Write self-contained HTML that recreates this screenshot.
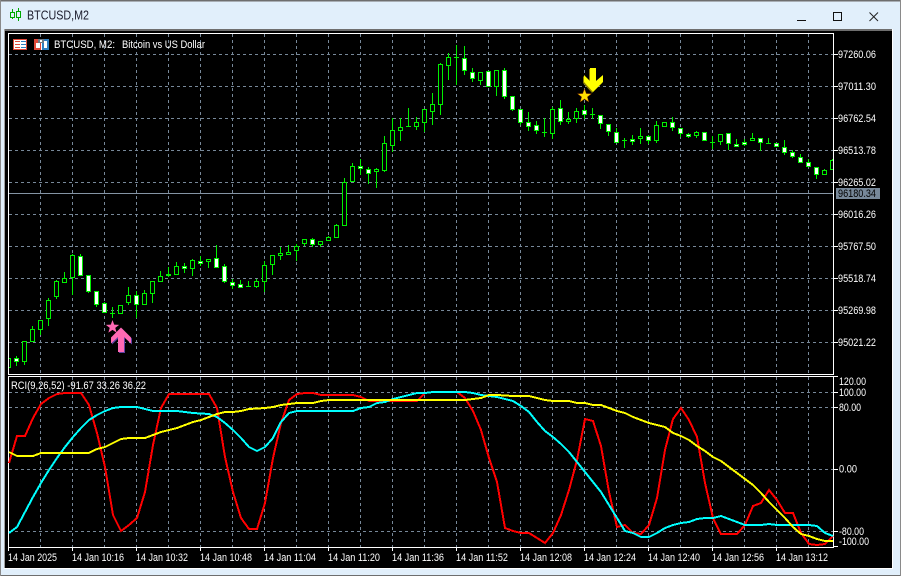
<!DOCTYPE html>
<html><head><meta charset="utf-8"><title>BTCUSD,M2</title>
<style>
html,body{margin:0;padding:0;background:#e1effb;width:901px;height:576px;overflow:hidden}
svg{display:block;position:absolute;left:0;top:0}
text{font-family:"Liberation Sans",sans-serif;font-size:11px;fill:#fff}
</style></head>
<body>
<svg width="901" height="576" viewBox="0 0 901 576" xmlns="http://www.w3.org/2000/svg">
<defs><clipPath id="c"><rect x="9" y="34" width="824" height="340"/></clipPath></defs>
<g shape-rendering="crispEdges">
<rect width="901" height="576" fill="#e1effb"/>
<rect x="0" y="0" width="901" height="1.5" fill="#6e6e6e"/>
<rect x="0" y="575" width="901" height="1" fill="#6e6e6e"/>
<rect x="0" y="0" width="1" height="576" fill="#8a8a8a"/>
<rect x="900" y="0" width="1" height="576" fill="#8a8a8a"/>
<rect x="4" y="29" width="889" height="540" fill="#fff"/>
<rect x="4" y="29" width="888" height="2" fill="#6e6e6e"/>
<rect x="4" y="29" width="1" height="539" fill="#a0a0a0"/>
<rect x="5" y="31" width="887" height="537" fill="#000"/>
<!-- frames -->
<path d="M8.5 33.5H833.5V374.5H8.5ZM8.5 376.5H833.5V547.5H8.5Z" fill="none" stroke="#fff"/>
<!-- grid -->
<path fill="none" stroke="#778899" stroke-dasharray="3 3" d="M40.5 34V374m32-340V374m32-340V374m32-340V374m32-340V374m32-340V374m32-340V374m32-340V374m32-340V374m32-340V374m32-340V374m32-340V374m32-340V374m32-340V374m32-340V374m32-340V374m32-340V374m32-340V374m32-340V374m32-340V374m32-340V374m32-340V374m32-340V374m32-340V374m32-340V374"/>
<path fill="none" stroke="#778899" stroke-dasharray="3 3" d="M9 54.5H833M9 86.5H833M9 118.5H833M9 150.5H833M9 182.5H833M9 214.5H833M9 246.5H833M9 278.5H833M9 310.5H833M9 342.5H833"/>
<path fill="none" stroke="#778899" stroke-dasharray="3 3" d="M40.5 377V547m32-170V547m32-170V547m32-170V547m32-170V547m32-170V547m32-170V547m32-170V547m32-170V547m32-170V547m32-170V547m32-170V547m32-170V547m32-170V547m32-170V547m32-170V547m32-170V547m32-170V547m32-170V547m32-170V547m32-170V547m32-170V547m32-170V547m32-170V547m32-170V547"/>
<path fill="none" stroke="#778899" stroke-dasharray="3 3" d="M9 392.5H833M9 407.5H833M9 469.5H833M9 531.5H833"/>
<!-- bid line -->
<path d="M9 193.5H833" stroke="#8494a4" fill="none"/>
<!-- ticks -->
<path fill="none" stroke="#fff" d="M833 54.5h5M833 86.5h5M833 118.5h5M833 150.5h5M833 182.5h5M833 214.5h5M833 246.5h5M833 278.5h5M833 310.5h5M833 342.5h5M833 376.5h5M833 392.5h5M833 407.5h5M833 469.5h5M833 531.5h5M833 546.5h5M8.5 547v4M72.5 547v4M136.5 547v4M200.5 547v4M264.5 547v4M328.5 547v4M392.5 547v4M456.5 547v4M520.5 547v4M584.5 547v4M648.5 547v4M712.5 547v4M776.5 547v4"/>
<rect x="836" y="188" width="44" height="11" fill="#778899"/>
<!-- candles -->
<g clip-path="url(#c)">
<path fill="none" stroke="#00f000" d="M16.5 356V366M24.5 341V365M32.5 326V342M40.5 320V335M48.5 298V326M56.5 280V299M64.5 272V283M72.5 254V295M80.5 254V276M88.5 275V293M96.5 291V307M104.5 302V313M112.5 307V318M120.5 305V314M128.5 287V305M136.5 291V318M144.5 290V305M152.5 281V303M160.5 271V282M168.5 267V277M176.5 262V275M184.5 263V273M192.5 259V276M200.5 256V266M208.5 259V268M216.5 245V268M224.5 264V283M232.5 279V289M240.5 280V288M248.5 281V286M256.5 279V288M264.5 261V292M272.5 255V275M280.5 247V260M288.5 245V255M296.5 244V261M304.5 239V246M312.5 238V247M320.5 241V247M328.5 236V241M336.5 224V238M344.5 178V226M352.5 163V182M360.5 159V175M368.5 167V184M376.5 168V188M384.5 136V172M392.5 118V152M400.5 118V141M408.5 108V126M416.5 117V130M424.5 109V132M432.5 93V125M440.5 63V115M448.5 53V80M456.5 45V85M464.5 46V75M472.5 68V82M480.5 72V85M496.5 70V96M504.5 68V99M512.5 96V111M520.5 109V125M528.5 112V131M536.5 121V134M544.5 118V137M552.5 107V139M560.5 100V125M568.5 112V124M576.5 108V123M584.5 105V119M592.5 108V119M600.5 115V129M608.5 124V136M616.5 128V143M624.5 138V148M632.5 135V145M640.5 128V144M648.5 135V144M656.5 121V143M672.5 117V131M680.5 128V137M688.5 133V138M696.5 131V138M712.5 136V149M720.5 134V145M728.5 133V150M736.5 139V147M744.5 139V146M752.5 133V141M760.5 138V151M768.5 138V143M784.5 140V155M792.5 150V158M800.5 154V163M808.5 159V167M816.5 167V179M824.5 169V175M832.5 159V170"/>
<path fill="none" stroke="#00f000" d="M110 313.5h5M166 274.5h5M166 275.5h5M246 286.5h5M406 126.5h5M454 57.5h5M542 132.5h5M590 114.5h5M622 140.5h5M710 142.5h5M766 143.5h5"/>
<path fill="#000" stroke="#00f000" d="M6.5 358.5h4V367.5h-4zM22.5 341.5h4V361.5h-4zM30.5 329.5h4V341.5h-4zM38.5 320.5h4V329.5h-4zM46.5 300.5h4V318.5h-4zM54.5 281.5h4V296.5h-4zM62.5 278.5h4V282.5h-4zM70.5 255.5h4V277.5h-4zM118.5 305.5h4V313.5h-4zM126.5 295.5h4V302.5h-4zM142.5 293.5h4V304.5h-4zM150.5 281.5h4V293.5h-4zM158.5 276.5h4V281.5h-4zM174.5 266.5h4V274.5h-4zM190.5 260.5h4V268.5h-4zM206.5 259.5h4V261.5h-4zM254.5 281.5h4V286.5h-4zM262.5 265.5h4V281.5h-4zM270.5 255.5h4V264.5h-4zM278.5 253.5h4V255.5h-4zM286.5 252.5h4V254.5h-4zM294.5 246.5h4V250.5h-4zM302.5 239.5h4V243.5h-4zM318.5 241.5h4V244.5h-4zM326.5 237.5h4V240.5h-4zM334.5 225.5h4V237.5h-4zM342.5 182.5h4V225.5h-4zM350.5 166.5h4V181.5h-4zM374.5 169.5h4V171.5h-4zM382.5 143.5h4V170.5h-4zM390.5 130.5h4V145.5h-4zM398.5 127.5h4V130.5h-4zM414.5 122.5h4V126.5h-4zM422.5 109.5h4V122.5h-4zM430.5 104.5h4V111.5h-4zM438.5 64.5h4V104.5h-4zM446.5 57.5h4V65.5h-4zM478.5 72.5h4V80.5h-4zM494.5 70.5h4V86.5h-4zM550.5 109.5h4V133.5h-4zM566.5 119.5h4V121.5h-4zM574.5 111.5h4V118.5h-4zM638.5 136.5h4V138.5h-4zM654.5 125.5h4V140.5h-4zM662.5 122.5h4V126.5h-4zM694.5 132.5h4V135.5h-4zM718.5 134.5h4V141.5h-4zM750.5 138.5h4V140.5h-4zM822.5 170.5h4V174.5h-4zM830.5 160.5h4V169.5h-4z"/>
<path fill="#fff" stroke="#00f000" d="M14.5 358.5h4V361.5h-4zM78.5 256.5h4V275.5h-4zM86.5 275.5h4V291.5h-4zM94.5 291.5h4V304.5h-4zM102.5 303.5h4V312.5h-4zM134.5 295.5h4V304.5h-4zM182.5 266.5h4V268.5h-4zM198.5 261.5h4V263.5h-4zM214.5 258.5h4V267.5h-4zM222.5 266.5h4V281.5h-4zM230.5 282.5h4V285.5h-4zM238.5 284.5h4V287.5h-4zM310.5 239.5h4V244.5h-4zM358.5 166.5h4V168.5h-4zM366.5 169.5h4V173.5h-4zM462.5 58.5h4V70.5h-4zM470.5 72.5h4V78.5h-4zM486.5 71.5h4V86.5h-4zM502.5 70.5h4V96.5h-4zM510.5 96.5h4V109.5h-4zM518.5 109.5h4V122.5h-4zM526.5 122.5h4V126.5h-4zM534.5 125.5h4V130.5h-4zM558.5 108.5h4V121.5h-4zM582.5 110.5h4V114.5h-4zM598.5 115.5h4V123.5h-4zM606.5 124.5h4V131.5h-4zM614.5 132.5h4V142.5h-4zM630.5 139.5h4V141.5h-4zM646.5 136.5h4V140.5h-4zM670.5 122.5h4V127.5h-4zM678.5 128.5h4V133.5h-4zM686.5 134.5h4V136.5h-4zM702.5 132.5h4V140.5h-4zM726.5 133.5h4V143.5h-4zM734.5 144.5h4V146.5h-4zM742.5 142.5h4V144.5h-4zM758.5 138.5h4V142.5h-4zM774.5 143.5h4V146.5h-4zM782.5 147.5h4V152.5h-4zM790.5 152.5h4V156.5h-4zM798.5 157.5h4V162.5h-4zM806.5 162.5h4V166.5h-4zM814.5 167.5h4V174.5h-4z"/>
</g>
<!-- indicator lines -->
<g fill="none" stroke-width="2" transform="translate(1,0)">
<polyline stroke="#ff0000" points="8,463 16,436 24,436 32,418 40,404 48,398 56,394 64,393 80,393 88,405 96,433 104,467 112,515 120,531 128,525 136,518 144,492 152,445 160,408 168,394 208,394 216,408 224,457 232,492 240,518 248,529 256,529 264,503 272,458 280,423 288,400 296,394 304,393 312,393 320,395 352,395 360,397 368,401 416,401 424,393 432,392 456,392 464,398 472,411 480,430 488,458 496,482 504,528 512,531 520,533 528,533 536,538 544,543 552,533 560,515 568,490 576,460 584,419 592,421 600,446 608,492 616,527 624,525 632,533 640,534 648,525 656,498 664,450 672,419 680,408 688,420 696,437 704,483 712,518 720,534 736,534 744,525 752,506 760,503 768,490 776,500 784,513 792,513 800,533 808,544 816,545 824,544 832,536"/>
<polyline stroke="#00ffff" points="8,533 16,527 24,512 32,497 40,483 48,470 56,458 64,447 72,437 80,428 88,420 96,415 104,411 112,408 120,407 136,407 144,409 152,411 176,411 184,412 192,413 208,414 216,417 224,423 232,430 240,438 248,447 256,451 264,447 272,438 280,422 288,413 296,411 352,411 360,408 368,407 376,403 384,402 392,399 400,397 408,395 416,393 424,393 432,392 464,392 472,393 480,395 488,396 496,397 504,399 512,401 520,406 528,412 536,422 544,431 552,437 560,444 568,452 576,462 584,472 592,482 600,492 608,505 616,518 624,531 632,533 640,537 648,537 656,533 664,528 672,525 680,523 688,522 696,519 704,518 712,518 720,516 728,519 736,522 744,525 760,525 768,524 776,525 808,525 816,526 824,533 832,536"/>
<polyline stroke="#ffff00" points="8,452 16,456 32,456 40,453 88,453 96,449 104,447 112,443 120,439 128,438 144,438 152,435 160,432 168,430 176,428 184,425 192,422 200,420 208,417 216,414 224,412 232,412 240,411 248,409 264,408 272,407 280,405 288,404 296,403 312,403 320,401 328,400 464,400 472,399 480,398 488,395 496,395 512,396 528,396 536,398 544,400 552,401 568,401 576,403 584,403 592,405 600,405 608,408 616,411 624,413 632,417 640,420 648,423 656,425 664,427 672,433 680,436 688,440 696,446 704,451 712,457 720,461 728,467 736,473 744,479 752,485 760,493 768,502 776,510 784,518 792,527 800,534 808,536 816,539 824,541 832,541"/>
</g>
</g>
<!-- arrows & stars -->
<polygon fill="#5b3fa0" points="122,328.5 132,338.5 132,344.5 125,338 125,353 119,353 119,338 112,344.5 112,338.5"/>
<polygon fill="#ff69b4" points="121,327.5 131,337.5 131,343.5 124,337 124,352 118,352 118,337 111,343.5 111,337.5"/>
<polygon fill="#ff69b4" transform="translate(112.5,327)" points="0,-7 1.7,-2.35 6.66,-2.16 2.76,.9 4.11,5.66 0,2.9 -4.11,5.66 -2.76,.9 -6.66,-2.16 -1.7,-2.35"/>
<polygon fill="#8a7a00" points="589,69 595,69 595,82 602,76 602,83 592,93 583,83 583,76 589,82"/>
<polygon fill="#ffff00" points="590,68 596,68 596,81 603,75 603,82 593,92 584,82 584,75 590,81"/>
<polygon fill="#b05000" transform="translate(584.5,96) scale(1.1)" points="0,-7 1.7,-2.35 6.66,-2.16 2.76,.9 4.11,5.66 0,2.9 -4.11,5.66 -2.76,.9 -6.66,-2.16 -1.7,-2.35"/>
<polygon fill="#ffe000" transform="translate(584.5,96) scale(.92)" points="0,-7 1.7,-2.35 6.66,-2.16 2.76,.9 4.11,5.66 0,2.9 -4.11,5.66 -2.76,.9 -6.66,-2.16 -1.7,-2.35"/>
<!-- chart icons -->
<g shape-rendering="crispEdges">
<rect x="13.5" y="39.5" width="13" height="10" fill="#fff" stroke="#e04a3a"/>
<path fill="none" stroke="#e04a3a" d="M15 41.5h5M15 44.5h5M15 47.5h5"/>
<path fill="none" stroke="#2f7fc0" d="M21 41.5h5M21 44.5h5M21 47.5h5"/>
<rect x="34" y="39" width="7" height="11" fill="#e04a3a"/>
<rect x="42" y="39" width="7" height="11" fill="#2f7fc0"/>
<rect x="41" y="43" width="1" height="7" fill="#fff"/>
<rect x="36" y="43" width="4" height="5" fill="#fff"/>
<rect x="44" y="41" width="3" height="7" fill="#fff"/>
<rect x="38" y="39" width="6" height="4" fill="#6e7a86"/>
<rect x="40" y="40" width="2" height="2" fill="#fff"/>
<!-- title icon -->
<path fill="none" stroke="#00a800" d="M12.5 9V19M18.5 8V21"/>
<path fill="#e1effb" stroke="#00a800" d="M10.5 12.5h4V17.5h-4zM16.5 11.5h4V17.5h-4z"/>
<!-- window buttons -->
<path fill="none" stroke="#111" d="M797 20.5h9M833.5 12.5h8v8h-8z"/>
</g>
<path fill="none" stroke="#222" d="M869.5 12.5l8.5 8.5M878 12.5l-8.5 8.5"/>
<!-- text -->
<text x="27" y="19.5" textLength="62" lengthAdjust="spacingAndGlyphs" style="font-size:12.5px;fill:#1c1c2c">BTCUSD,M2</text>
<text x="54" y="48" textLength="61" lengthAdjust="spacingAndGlyphs">BTCUSD, M2:</text>
<text x="122" y="48" textLength="83" lengthAdjust="spacingAndGlyphs">Bitcoin vs US Dollar</text>
<text x="11" y="389" textLength="135" lengthAdjust="spacingAndGlyphs">RCI(9,26,52) -91.67 33.26 36.22</text>
<text x="838" y="58" textLength="38" lengthAdjust="spacingAndGlyphs">97260.06</text>
<text x="838" y="90" textLength="38" lengthAdjust="spacingAndGlyphs">97011.30</text>
<text x="838" y="122" textLength="38" lengthAdjust="spacingAndGlyphs">96762.54</text>
<text x="838" y="154" textLength="38" lengthAdjust="spacingAndGlyphs">96513.78</text>
<text x="838" y="186" textLength="38" lengthAdjust="spacingAndGlyphs">96265.02</text>
<text x="838" y="197" textLength="38" lengthAdjust="spacingAndGlyphs" style="fill:#000">96180.34</text>
<text x="838" y="218" textLength="38" lengthAdjust="spacingAndGlyphs">96016.26</text>
<text x="838" y="250" textLength="38" lengthAdjust="spacingAndGlyphs">95767.50</text>
<text x="838" y="282" textLength="38" lengthAdjust="spacingAndGlyphs">95518.74</text>
<text x="838" y="314" textLength="38" lengthAdjust="spacingAndGlyphs">95269.98</text>
<text x="838" y="346" textLength="38" lengthAdjust="spacingAndGlyphs">95021.22</text>
<text x="839" y="385" textLength="27" lengthAdjust="spacingAndGlyphs">120.00</text>
<text x="839" y="396" textLength="27" lengthAdjust="spacingAndGlyphs">100.00</text>
<text x="839" y="411" textLength="22" lengthAdjust="spacingAndGlyphs">80.00</text>
<text x="839" y="472.5" textLength="18" lengthAdjust="spacingAndGlyphs">0.00</text>
<text x="839" y="535" textLength="25" lengthAdjust="spacingAndGlyphs">-80.00</text>
<text x="839" y="545" textLength="30" lengthAdjust="spacingAndGlyphs">-100.00</text>
<text x="8" y="561" textLength="49" lengthAdjust="spacingAndGlyphs">14 Jan 2025</text>
<text x="72" y="561" textLength="52" lengthAdjust="spacingAndGlyphs">14 Jan 10:16</text>
<text x="136" y="561" textLength="52" lengthAdjust="spacingAndGlyphs">14 Jan 10:32</text>
<text x="200" y="561" textLength="52" lengthAdjust="spacingAndGlyphs">14 Jan 10:48</text>
<text x="264" y="561" textLength="52" lengthAdjust="spacingAndGlyphs">14 Jan 11:04</text>
<text x="328" y="561" textLength="52" lengthAdjust="spacingAndGlyphs">14 Jan 11:20</text>
<text x="392" y="561" textLength="52" lengthAdjust="spacingAndGlyphs">14 Jan 11:36</text>
<text x="456" y="561" textLength="52" lengthAdjust="spacingAndGlyphs">14 Jan 11:52</text>
<text x="520" y="561" textLength="52" lengthAdjust="spacingAndGlyphs">14 Jan 12:08</text>
<text x="584" y="561" textLength="52" lengthAdjust="spacingAndGlyphs">14 Jan 12:24</text>
<text x="648" y="561" textLength="52" lengthAdjust="spacingAndGlyphs">14 Jan 12:40</text>
<text x="712" y="561" textLength="52" lengthAdjust="spacingAndGlyphs">14 Jan 12:56</text>
<text x="776" y="561" textLength="52" lengthAdjust="spacingAndGlyphs">14 Jan 13:12</text>
</svg>
</body></html>
